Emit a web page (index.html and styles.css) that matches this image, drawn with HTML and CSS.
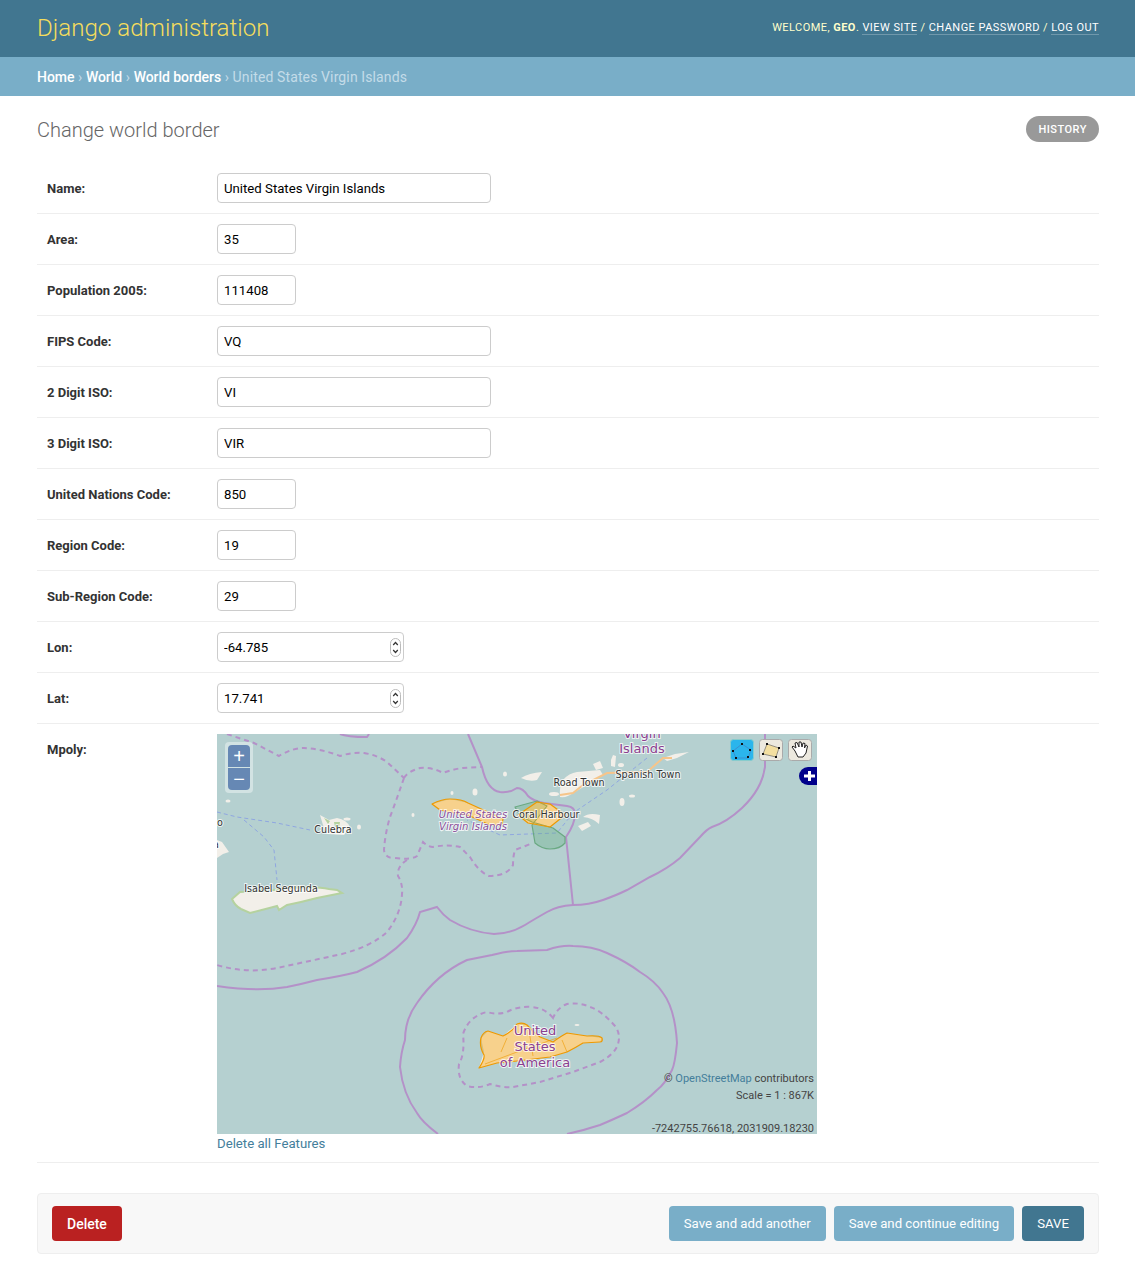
FILE: index.html
```html
<!DOCTYPE html>
<html lang="en">
<head>
  <meta charset="UTF-8">
  <title>Change world border | Django site admin</title>
  <link rel="stylesheet" href="styles.css">
</head>
<body>

  <header class="header">
    <div class="branding">Django administration</div>
    <div class="user-tools">
      Welcome, <strong>geo</strong>.
      <a href="#">View site</a> /
      <a href="#">Change password</a> /
      <a href="#">Log out</a>
    </div>
  </header>

  <nav class="breadcrumbs">
    <a href="#">Home</a> › <a href="#">World</a> › <a href="#">World borders</a> › United States Virgin Islands
  </nav>

  <main class="content">
    <div class="title-row">
      <h1>Change world border</h1>
      <a class="history-link" href="#">History</a>
    </div>

    <form>
      <div class="form-row">
        <label>Name:</label>
        <input class="field-wide" type="text" value="United States Virgin Islands">
      </div>
      <div class="form-row">
        <label>Area:</label>
        <input class="field-small" type="text" value="35">
      </div>
      <div class="form-row">
        <label>Population 2005:</label>
        <input class="field-small" type="text" value="111408">
      </div>
      <div class="form-row">
        <label>FIPS Code:</label>
        <input class="field-wide" type="text" value="VQ">
      </div>
      <div class="form-row">
        <label>2 Digit ISO:</label>
        <input class="field-wide" type="text" value="VI">
      </div>
      <div class="form-row">
        <label>3 Digit ISO:</label>
        <input class="field-wide" type="text" value="VIR">
      </div>
      <div class="form-row">
        <label>United Nations Code:</label>
        <input class="field-small" type="text" value="850">
      </div>
      <div class="form-row">
        <label>Region Code:</label>
        <input class="field-small" type="text" value="19">
      </div>
      <div class="form-row">
        <label>Sub-Region Code:</label>
        <input class="field-small" type="text" value="29">
      </div>
      <div class="form-row">
        <label>Lon:</label>
        <div class="number-wrap">
          <input class="field-number" type="text" value="-64.785">
          <svg class="spinner" viewBox="0 0 11 19" width="11" height="19">
            <rect x="0.5" y="0.5" width="10" height="18" rx="5" fill="#fff" stroke="#bbb"/>
            <path d="M3.2 7 5.500 4.500 7.800 7M3.200 12 5.500 14.500 7.800 12" fill="none" stroke="#333" stroke-width="1.2"/>
          </svg>
        </div>
      </div>
      <div class="form-row">
        <label>Lat:</label>
        <div class="number-wrap">
          <input class="field-number" type="text" value="17.741">
          <svg class="spinner" viewBox="0 0 11 19" width="11" height="19">
            <rect x="0.5" y="0.5" width="10" height="18" rx="5" fill="#fff" stroke="#bbb"/>
            <path d="M3.2 7 5.500 4.500 7.800 7M3.200 12 5.500 14.500 7.800 12" fill="none" stroke="#333" stroke-width="1.2"/>
          </svg>
        </div>
      </div>

      <div class="form-row">
        <label>Mpoly:</label>
        <div class="map-field">
          <div class="map">
            <svg class="map-canvas" viewBox="0 0 600 400" width="600" height="400">
              <g class="tiles">
                <!-- land -->
                <g class="land">
                  <path d="M343 63Q342 52 346 46Q352 39 360 38L383 36L386 41Q378 47 370 51L356 59Q350 64 343 63Z"/>
                  <path d="M304 44Q312 39 325 38L320 46Q312 48 304 44Z"/>
                  <path d="M376 30 383 27 386 34 379 36Z"/>
                  <path d="M394 26 396 21 399 22 398 33 394 32Z"/>
                  <path d="M446 24 458 20 472 18 460 24 450 27Z"/>
                  <path d="M366 83Q372 78 383 81L382 90Q376 84 366 83Z"/>
                  <path d="M361 92 371 88 374 92 365 97Z"/>
                  <path d="M103 81 112 86 120 84Q130 86 133 93L127 101 110 100 106 91Z"/>
                  <path d="M0 106 5 108 12 118 6 120 0 124Z"/>
                  <path d="M262 334 267 318 264 304 271 297 286 302 300 290 310 291 323 303 336 308 350 299 370 302 385 304 383 308 366 309 350 318 333 323 300 327 280 329Z"/>
                  <path d="M215 70 233 65 251 69 273 79 286 85 285 91 273 91 253 82 223 76Z"/>
                  <path d="M301 81 320 68 333 70 348 81 333 93 311 89Z"/>
                  <ellipse cx="405" cy="68" rx="2.500" ry="4"/>
                  <ellipse cx="415" cy="62" rx="3" ry="1.500"/>
                  <ellipse cx="404" cy="31" rx="3" ry="2"/>
                  <ellipse cx="288" cy="40" rx="2" ry="2.500"/>
                  <ellipse cx="258" cy="58" rx="2.500" ry="3.500"/>
                  <ellipse cx="235" cy="59" rx="1.500" ry="2"/>
                  <ellipse cx="196" cy="81" rx="1.500" ry="2"/>
                  <ellipse cx="337" cy="60" rx="5" ry="2"/>
                  <ellipse cx="130" cy="85" rx="3.500" ry="1.500"/>
                  <ellipse cx="142" cy="93" rx="2" ry="2.500"/>
                  <ellipse cx="11" cy="67" rx="2.500" ry="1.500"/>
                  <ellipse cx="360" cy="291" rx="2.500" ry="1"/>
                </g>
                <path class="vieques" d="M15 165Q18 172 24 175L33 179Q45 176 60 172L62 176 70 171Q85 168 100 164L110 162Q120 160 125 159L120 156 112 155Q100 152 70 154L57 156 23 158Z"/>
                <path class="park" d="M107 84 113 87 111 90Z"/>
                <path class="park" d="M117 88 123 88 122 93 118 93Z"/>

                <!-- maritime boundaries -->
                <g class="boundary">
                  <path d="M251 0L265 33Q270 56 283 58Q293 59 300 54Q306 54 311 62Q316 67 327 69L350 72Q358 73 358 80Q358 90 349 103L356 171"/>
                  <path d="M356 171Q340 172 330 178Q316 186 308 191Q293 200 277 200Q253 198 233 186Q226 181 220 173L203 178Q200 190 190 204Q170 225 140 238Q125 242 100 246Q85 250 70 253Q40 258 0 252"/>
                  <path d="M356 171Q372 171 386 166Q400 161 410 156L433 143Q450 135 463 124L483 103Q490 95 495 93Q510 88 525 74Q545 55 548 33L548 0"/>
                  <path d="M221 400Q205 388 200 379Q186 360 183 333Q184 318 188 306Q188 285 200 269Q220 240 250 226L275 221Q290 217 300 217L330 216Q345 211 356 212Q375 212 390 219Q410 228 423 238Q438 247 446 259Q458 275 460 309Q458 330 455 336Q448 350 440 356Q428 368 410 379Q395 386 383 391Q368 396 350 400"/>
                  <path d="M123 0Q130 3 150 3L152 0"/>
                </g>
                <g class="boundary dashed">
                  <path d="M10 0L37 9 62 22Q75 14 87 14Q105 15 123 22Q135 18 147 19Q160 21 170 28L187 44"/>
                  <path d="M187 44Q190 38 203 34Q215 33 226 39Q236 35 246 34L265 33"/>
                  <path d="M187 44Q178 70 173 83Q168 100 167 116Q168 124 177 124Q195 126 200 122L206 108Q211 113 216 113Q230 110 243 113L253 123Q262 138 272 142Q290 142 296 131Q296 122 298 116L316 109"/>
                  <path d="M190 126Q180 132 181 142Q186 150 185 160Q184 180 170 198Q155 212 125 220L60 234Q30 240 0 231"/>
                  <path d="M336 284Q328 274 315 273Q300 272 290 278Q280 281 270 278Q252 282 246 300Q248 320 242 330Q240 345 250 352Q262 355 273 350Q285 354 296 353L323 348 356 338 383 328Q398 320 401 310Q404 300 398 292Q385 277 373 273Q362 268 350 270Q340 274 336 284Z"/>
                </g>
                <g class="ferry">
                  <path d="M0 78 20 83 60 89 93 96"/>
                  <path d="M27 86 47 103 57 116 58 126 60 146"/>
                  <path d="M430 24 390 56 356 79 340 99 283 101 250 86"/>
                </g>
                <path class="road" d="M343 61 356 59 366 51 390 39 430 38 446 24 455 24"/>
              </g>

              <!-- drawn geometry -->
              <path class="geom-green" d="M298 73 320 67 330 72 315 91 318 109Q325 115 333 115Q343 115 348 109L348 103 336 94 315 88 303 82Z"/>
              <path class="geom" d="M262 334Q268 325 267 321Q262 312 264 304Q266 298 271 297Q280 300 286 302Q295 298 300 290Q306 288 310 291Q316 298 323 303L336 308Q344 302 350 299L370 302Q382 301 385 304Q386 308 383 308L366 309Q358 314 350 318L333 323 300 327 280 329Z"/>
              <path class="geom-inner" d="M268 330 300 318 340 304M345 306 350 318M284 318 290 304M312 296 316 322"/>
              <path class="geom" d="M215 70Q225 65 233 65Q245 65 251 69L273 79 286 85 285 91 273 91 253 82 223 76Z"/>
              <path class="geom" d="M301 81 320 68 333 70 348 81 333 93 311 89Z"/>

              <!-- labels -->
              <g class="place">
                <text x="116" y="99">Culebra</text>
                <text x="64" y="158">Isabel Segunda</text>
                <text x="362" y="52">Road Town</text>
                <text x="431" y="44">Spanish Town</text>
                <text x="329" y="84">Coral Harbour</text>
                <text x="3" y="92">o</text>
                <text x="-1" y="114">a</text>
              </g>
              <g class="country">
                <text x="425" y="4">Virgin</text>
                <text x="425" y="19">Islands</text>
                <text x="318" y="301">United</text>
                <text x="318" y="317">States</text>
                <text x="318" y="333">of America</text>
              </g>
              <g class="country-small">
                <text x="256" y="84">United States</text>
                <text x="256" y="96">Virgin Islands</text>
              </g>

              <!-- edit toolbar -->
              <rect x="513.500" y="5.500" width="23" height="21" rx="3" fill="#2bb5ec" stroke="#8cc"/>
              <path d="M525 10 534 16 531 24 519 24 516 17Z" fill="none" stroke="#3a8fd0"/>
              <g fill="#111">
                <rect x="524" y="9" width="2" height="2"/>
                <rect x="532" y="15" width="2" height="2"/>
                <rect x="530" y="22" width="2" height="2"/>
                <rect x="518" y="23" width="2" height="2"/>
                <rect x="515" y="16" width="2" height="2"/>
              </g>
              <rect x="542.500" y="5.500" width="23" height="21" rx="3" fill="#ece9df" stroke="#aaa"/>
              <path d="M550 10 562 14 559 23 546 20Z" fill="#f3dfa0" stroke="#555" stroke-width=".6"/>
              <g fill="#111">
                <rect x="549" y="9" width="2" height="2"/>
                <rect x="561" y="13" width="2" height="2"/>
                <rect x="558" y="22" width="2" height="2"/>
                <rect x="545" y="19" width="2" height="2"/>
              </g>
              <rect x="571.500" y="5.500" width="23" height="21" rx="3" fill="#ece9df" stroke="#aaa"/>
              <path d="M578 17 575 13 576 12 579 14 578 9 580 8.500 582 13 582 8 584 8 585 13 586 9 588 9.500 587.500 14 589 11 590.500 12 589 19 586 23 581 23Z" fill="#fff" stroke="#222" stroke-width="1"/>

              <!-- layer switcher -->
              <path d="M600 33H591A9 9 0 0 0 591 51H600Z" fill="#00008b"/>
              <path d="M587 42h11M592.500 37v10" stroke="#fff" stroke-width="3"/>
            </svg>

            <div class="zoom-control">
              <button type="button">+</button>
              <button type="button">−</button>
            </div>
            <div class="map-info">
              <div>© <a href="#">OpenStreetMap</a> contributors</div>
              <div>Scale = 1 : 867K</div>
              <div class="map-coords">-7242755.76618, 2031909.18230</div>
            </div>
          </div>
          <a class="delete-features" href="#">Delete all Features</a>
        </div>
      </div>

      <div class="submit-row">
        <a class="btn-delete" href="#">Delete</a>
        <div class="submit-right">
          <button class="btn-secondary" type="button">Save and add another</button>
          <button class="btn-secondary" type="button">Save and continue editing</button>
          <button class="btn-save" type="button">SAVE</button>
        </div>
      </div>
    </form>
  </main>

</body>
</html>
```

FILE: styles.css
```css
* {
  box-sizing: border-box;
  margin: 0;
  padding: 0;
}

body {
  font-family: Roboto, "Liberation Sans", sans-serif;
  font-size: 14px;
  color: #333;
  background: #fff;
}

a {
  text-decoration: none;
}

.header {
  height: 57px;
  padding: 0 36px 2px 37px;
  background: #417690;
  display: flex;
  justify-content: space-between;
  align-items: center;
}

.branding {
  font-size: 24.1px;
  font-weight: 300;
  color: #f5dd5d;
}

.user-tools {
  font-size: 11px;
  letter-spacing: 0.45px;
  text-transform: uppercase;
  color: #ffc;
}

.user-tools strong {
  font-weight: 700;
}

.user-tools a {
  color: #fff;
  border-bottom: 1px solid rgba(255, 255, 255, 0.25);
}

.breadcrumbs {
  height: 39px;
  padding: 0 37px;
  background: #79aec8;
  color: #c4dce8;
  font-size: 14px;
  letter-spacing: 0.12px;
  line-height: 41px;
}

.breadcrumbs a {
  color: #fff;
  font-weight: 500;
  letter-spacing: -0.05px;
}

.content {
  padding: 20px 36px 9px 37px;
}

.title-row {
  height: 47px;
  display: flex;
  justify-content: space-between;
  align-items: flex-start;
}

h1 {
  font-size: 20px;
  font-weight: 300;
  color: #666;
  line-height: 28px;
}

.history-link {
  height: 26px;
  padding: 0 12px;
  border-radius: 13px;
  background: #999;
  color: #fff;
  font-size: 11px;
  font-weight: 500;
  letter-spacing: 0.5px;
  line-height: 27px;
  text-transform: uppercase;
}

.form-row {
  display: flex;
  align-items: flex-start;
  padding: 10px;
  border-bottom: 1px solid #eee;
}

.form-row label {
  width: 170px;
  height: 30px;
  flex-shrink: 0;
  font-weight: 700;
  font-size: 13px;
  line-height: 32px;
}

input {
  height: 30px;
  padding: 0 6px;
  border: 1px solid #ccc;
  border-radius: 4px;
  font-family: Roboto, "Liberation Sans", sans-serif;
  font-size: 13.2px;
  color: #000;
  background: #fff;
}

.field-wide {
  width: 274px;
}

.field-small {
  width: 79px;
}

.field-number {
  width: 187px;
}

.number-wrap {
  position: relative;
  display: flex;
}

.spinner {
  position: absolute;
  right: 3px;
  top: 6px;
}

.map-field {
  width: 600px;
}

.map {
  position: relative;
  width: 600px;
  height: 400px;
  overflow: hidden;
  background: #b5d0d0;
}

.map-canvas {
  display: block;
}

.tiles {
  filter: blur(0.4px);
}

.land path,
.land ellipse {
  fill: #f2efe9;
}

.vieques {
  fill: #f2efe9;
  stroke: #b5d29f;
  stroke-width: 2;
}

.park {
  fill: #b5d29f;
}

.boundary path {
  fill: none;
  stroke: #b491c8;
  stroke-width: 2;
}

.boundary.dashed path {
  stroke-dasharray: 5 4;
}

.ferry path {
  fill: none;
  stroke: #8fa6e0;
  stroke-width: 1;
  stroke-dasharray: 4 3;
}

.road {
  fill: none;
  stroke: #f6c58a;
  stroke-width: 2;
}

.geom {
  fill: rgba(255, 165, 0, 0.4);
  stroke: #ee9900;
  stroke-width: 1.2;
  stroke-linejoin: round;
}

.geom-inner {
  fill: none;
  stroke: rgba(238, 153, 0, 0.6);
  stroke-width: 1;
}

.geom-green {
  fill: rgba(90, 170, 120, 0.3);
  stroke: #6aa982;
  stroke-width: 1.2;
  stroke-linejoin: round;
}

.map-canvas text {
  font-family: "DejaVu Sans", sans-serif;
  text-anchor: middle;
  paint-order: stroke;
  stroke: rgba(255, 255, 255, 0.75);
  stroke-width: 2px;
}

.place text {
  font-size: 9.6px;
  fill: #333;
}

.country text {
  font-size: 13px;
  fill: #8a3f8f;
}

.country-small text {
  font-size: 10.1px;
  font-style: italic;
  fill: #8a4f9a;
}

.zoom-control {
  position: absolute;
  left: 8px;
  top: 8px;
  width: 28px;
  height: 51px;
  padding: 3px;
  border-radius: 4px;
  background: rgba(255, 255, 255, 0.4);
  display: flex;
  flex-direction: column;
  gap: 1px;
}

.zoom-control button {
  height: 22px;
  border: none;
  background: #6688b4;
  color: #fff;
  font-family: "Liberation Sans", sans-serif;
  font-size: 20px;
  font-weight: 400;
  line-height: 20px;
}

.zoom-control button:first-child {
  border-radius: 4px 4px 0 0;
}

.zoom-control button:last-child {
  border-radius: 0 0 4px 4px;
}

.map-info {
  position: absolute;
  right: 3px;
  bottom: -3px;
  font-size: 11px;
  line-height: 17px;
  color: #444;
  text-align: right;
}

.map-info a {
  color: #447e9b;
}

.map-coords {
  margin-top: 16px;
}

.delete-features {
  display: block;
  margin-top: 1px;
  font-size: 13.2px;
  line-height: 17px;
  color: #447e9b;
}

.submit-row {
  margin-top: 30px;
  height: 61px;
  padding: 12px 14px;
  background: #f8f8f8;
  border: 1px solid #eee;
  border-radius: 4px;
  display: flex;
  justify-content: space-between;
}

.submit-right {
  display: flex;
  gap: 8px;
}

.btn-delete,
.submit-right button {
  height: 35px;
  padding: 0 15px;
  border: none;
  border-radius: 4px;
  color: #fff;
  font-family: Roboto, "Liberation Sans", sans-serif;
  font-size: 13.2px;
  line-height: 35px;
}

.btn-delete {
  background: #ba2121;
  font-size: 14px;
  font-weight: 500;
  line-height: 37px;
}

.btn-secondary {
  background: #79aec8;
}

.btn-save {
  background: #417690;
}
```
